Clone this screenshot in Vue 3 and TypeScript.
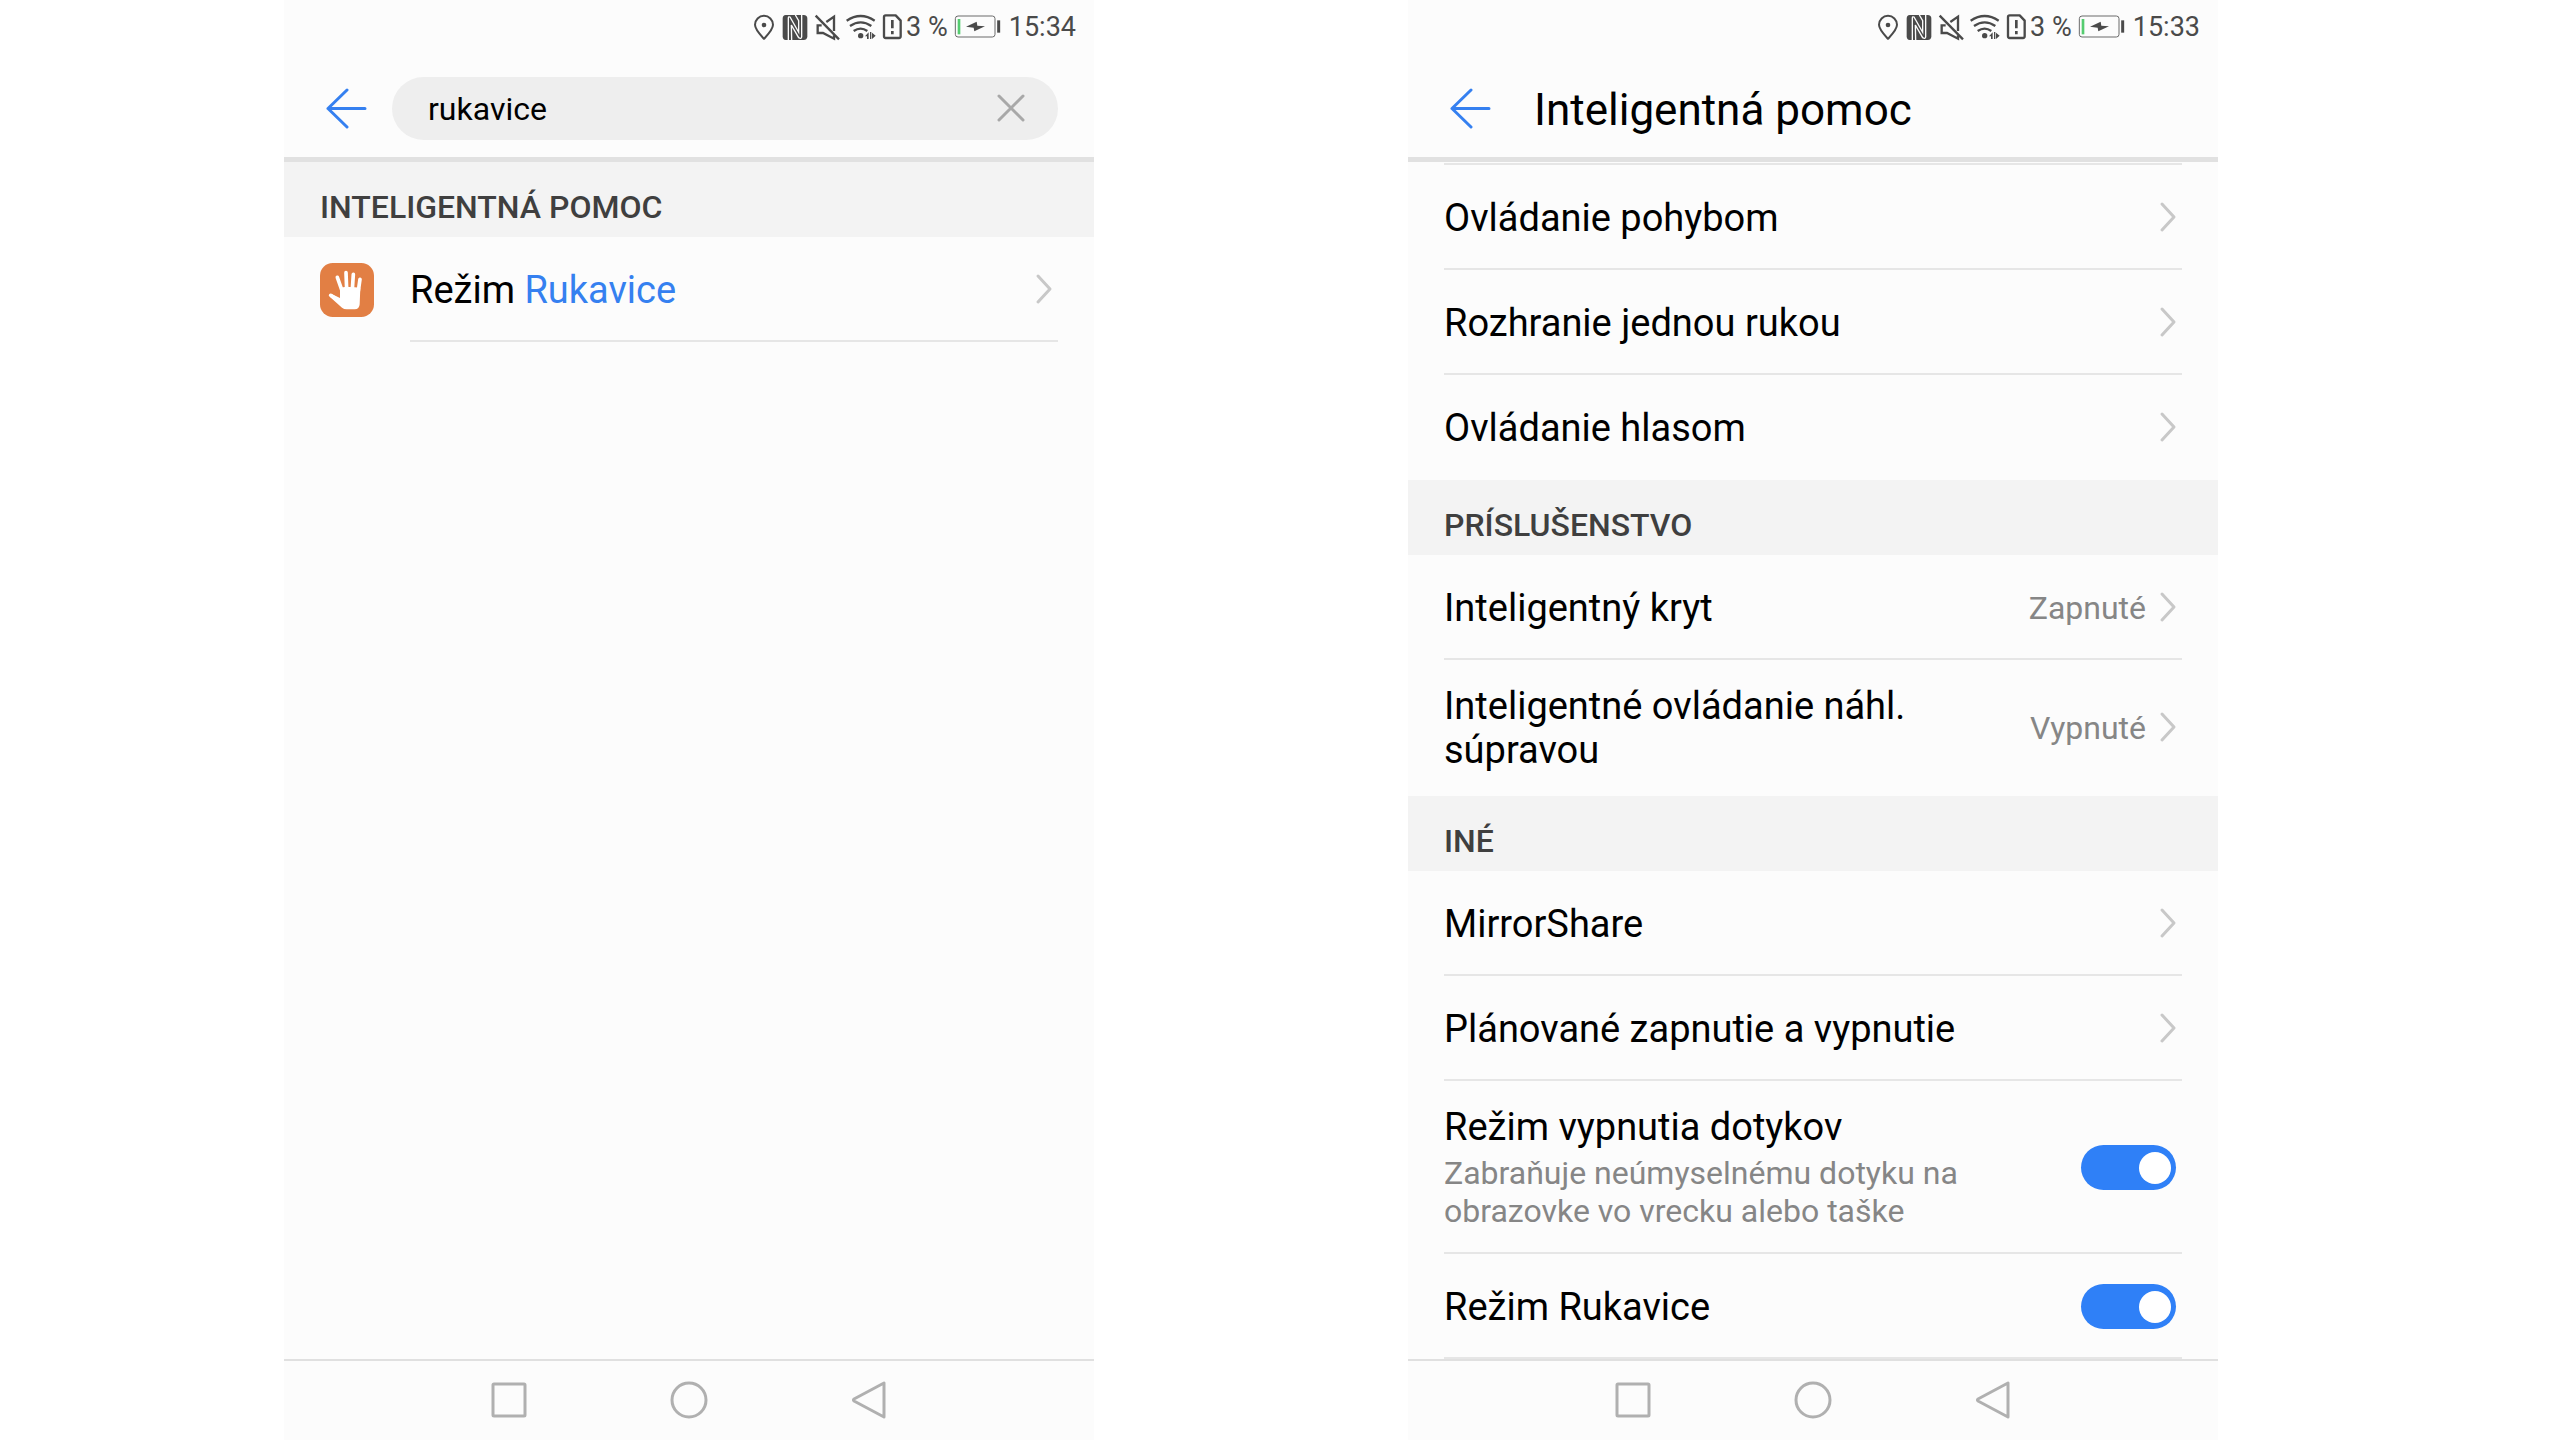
<script setup lang="ts">
import { ref } from 'vue'

interface Row {
  label: string
  value?: string
  hint?: string
  toggle?: boolean
}

interface Group {
  title?: string
  rows: Row[]
}

const query = ref('rukavice')
const times: string[] = ['15:34', '15:33']

const groups = ref<Group[]>([
  {
    rows: [
      { label: 'Ovládanie pohybom' },
      { label: 'Rozhranie jednou rukou' },
      { label: 'Ovládanie hlasom' },
    ],
  },
  {
    title: 'PRÍSLUŠENSTVO',
    rows: [
      { label: 'Inteligentný kryt', value: 'Zapnuté' },
      { label: 'Inteligentné ovládanie náhl. súpravou', value: 'Vypnuté' },
    ],
  },
  {
    title: 'INÉ',
    rows: [
      { label: 'MirrorShare' },
      { label: 'Plánované zapnutie a vypnutie' },
      {
        label: 'Režim vypnutia dotykov',
        hint: 'Zabraňuje neúmyselnému dotyku na obrazovke vo vrecku alebo taške',
        toggle: true,
      },
      { label: 'Režim Rukavice', toggle: true },
    ],
  },
])
</script>

<template>
  <main class="page">
    <section v-for="(time, i) in times" :key="time" class="phone">
      <div class="status">
        <svg class="pin" viewBox="45 42 60 78" aria-hidden="true">
          <path d="M75 47.500c-15 0-27 12-27 27 0 14 13 27 27 42 14-15 27-28 27-42 0-15-12-27-27-27z" fill="none" stroke="currentColor" stroke-width="6" stroke-linejoin="round" />
          <circle cx="75" cy="75" r="7" fill="currentColor" />
        </svg>
        <svg class="nfc" viewBox="123 42 90 78" aria-hidden="true">
          <path d="M140 45h54q11 0 11 11v53q0 11-11 11h-54q-9 0-9-11V56q0-11 9-11z" fill="currentColor" />
          <path d="M148 120V54q0-5 5-3l26 46V62l-10-17M158 120l-1-45 22 38q8 5 9-2V45" fill="none" stroke="#fcfcfc" stroke-width="4" />
        </svg>
        <svg class="mute" viewBox="231 42 72 78" aria-hidden="true">
          <path d="M230 47l70 71" fill="none" stroke="currentColor" stroke-width="7" />
          <path d="M248 76h-12v23h16l33 17v-10M262 66l23-16v43" fill="none" stroke="currentColor" stroke-width="7" />
        </svg>
        <svg class="wifi" viewBox="321 42 90 78" aria-hidden="true">
          <path d="M323 62q42-28 84 0M333 78q32-22 64 0M344 93q21-14 41 0" fill="none" stroke="currentColor" stroke-width="7" />
          <circle cx="365" cy="107" r="8" fill="currentColor" />
          <path d="M378 109l11-12v20h-5v-8zM393 96h4v21h-4zM399 98l11 9-11 10z" fill="currentColor" />
        </svg>
        <svg class="sim" viewBox="429 42 63 78" aria-hidden="true">
          <path d="M440 46h30l15 16v47q0 5-5 5h-40q-5 0-5-5V51q0-5 5-5z" fill="none" stroke="currentColor" stroke-width="7" stroke-linejoin="round" />
          <path d="M460 60v25M460 93v10" stroke="currentColor" stroke-width="8" />
        </svg>
        <span class="percent">3 %</span>
        <svg class="battery" viewBox="645 42 147 78" aria-hidden="true">
          <rect x="649" y="48" width="119" height="63" rx="8" fill="none" stroke="#6a6a6a" stroke-width="3" />
          <path d="M660 57v46" stroke="#55cc70" stroke-width="8" />
          <path d="M681 80l32-15 2 12 23 2-32 15-2-11z" fill="currentColor" />
          <path d="M779 61v37" stroke="currentColor" stroke-width="9" />
        </svg>
        <span class="time">{{ time }}</span>
      </div>

      <header class="bar">
        <button class="back" type="button" aria-label="Späť">
          <svg viewBox="0 0 41 41" aria-hidden="true">
            <path d="M21 2L2 20.500l19 18.500M2 20.500h37" fill="none" stroke="currentColor" stroke-width="3" stroke-linecap="round" stroke-linejoin="round" />
          </svg>
        </button>
        <form v-if="i === 0" class="search" @submit.prevent>
          <input v-model="query" type="text" aria-label="Hľadať" />
          <button type="button" aria-label="Vymazať" @click="query = ''">
            <svg viewBox="0 0 28 28" aria-hidden="true">
              <path d="M2 2l24 24M26 2L2 26" fill="none" stroke="currentColor" stroke-width="3" stroke-linecap="round" />
            </svg>
          </button>
        </form>
        <h1 v-else>Inteligentná pomoc</h1>
      </header>

      <div v-if="i === 0" class="list">
        <h2>INTELIGENTNÁ POMOC</h2>
        <a class="result" href="#">
          <svg class="app" viewBox="0 0 162 162" aria-hidden="true">
            <rect width="162" height="162" rx="38" fill="#e27f44" />
            <g fill="none" stroke="#fff" stroke-width="11" stroke-linecap="round">
              <path d="M32 97l30 20M52 43l14 40M78 29l2 50M100 34l-3 45M120 49l-5 35" />
            </g>
            <path d="M60 76q12-6 28-4 16 0 33 2l-2 50q-1 15-15 15H80q-8 0-14-5L30 102l5-9 25 12z" fill="#fff" />
          </svg>
          <span class="body">
            <span class="label">Režim <mark>Rukavice</mark></span>
            <svg class="chevron" viewBox="0 0 16 30" aria-hidden="true">
              <path d="M2 1l12 13L2 27" />
            </svg>
          </span>
        </a>
      </div>

      <div v-else class="list scrolled">
        <section v-for="(group, g) in groups" :key="g">
          <h2 v-if="group.title">{{ group.title }}</h2>
          <div class="rows" :class="{ open: g === groups.length - 1 }">
            <component
              :is="row.toggle === undefined ? 'a' : 'label'"
              v-for="row in group.rows"
              :key="row.label"
              class="body"
              :href="row.toggle === undefined ? '#' : undefined"
            >
              <span class="label">
                {{ row.label }}
                <small v-if="row.hint">{{ row.hint }}</small>
              </span>
              <span v-if="row.value" class="value">{{ row.value }}</span>
              <input v-if="row.toggle !== undefined" v-model="row.toggle" class="switch" type="checkbox" />
              <svg v-else class="chevron" viewBox="0 0 16 30" aria-hidden="true">
                <path d="M2 1l12 13L2 27" />
              </svg>
            </component>
          </div>
        </section>
      </div>

      <nav class="nav">
        <button type="button" aria-label="Posledné aplikácie">
          <svg viewBox="0 0 38 38" aria-hidden="true"><rect x="3" y="3" width="32" height="32" rx="1" /></svg>
        </button>
        <button type="button" aria-label="Domov">
          <svg viewBox="0 0 38 38" aria-hidden="true"><circle cx="19" cy="19" r="17" /></svg>
        </button>
        <button type="button" aria-label="Naspäť">
          <svg viewBox="0 0 38 38" aria-hidden="true"><path d="M34 2v34L4 20q-1-1 0-2z" /></svg>
        </button>
      </nav>
    </section>
  </main>
</template>

<style>
body {
  margin: 0;
  background: #fff;
}
</style>

<style scoped>
.page {
  display: grid;
  grid-template-columns: 284fr 810fr 314fr 810fr 342fr;
  min-height: 100vh;
  font-family: Roboto, 'Liberation Sans', sans-serif;
  color: #000;
}

.phone {
  display: flex;
  flex-direction: column;
  grid-column: 2;
  min-width: 0;
  background: #fcfcfc;
}

.phone + .phone {
  grid-column: 4;
}

svg {
  display: block;
  flex: none;
}

button {
  display: flex;
  align-items: center;
  justify-content: center;
  padding: 0;
  border: 0;
  background: none;
}

.status {
  display: flex;
  align-items: center;
  justify-content: flex-end;
  gap: 6px;
  height: 54px;
  padding-right: 18px;
  font-size: 27px;
  line-height: 32px;
  color: #4a4a4a;
}

.status svg {
  height: 26px;
  overflow: visible;
}

.pin { width: 20px; }
.nfc,
.wifi { width: 30px; }
.mute { width: 24px; }
.sim { width: 21px; }
.battery { width: 49px; }
.percent { margin-left: -3px; }

.bar {
  display: flex;
  align-items: center;
  gap: 25px;
  height: 108px;
  padding: 5px 36px 0 42px;
  box-sizing: border-box;
  border-bottom: 5px solid #e1e1e1;
}

.back {
  color: #3580f0;
}

.back svg {
  width: 41px;
  height: 41px;
}

.search {
  display: flex;
  flex: 1;
  align-items: center;
  height: 63px;
  min-width: 0;
  padding: 0 33px 0 36px;
  border-radius: 32px;
  background: #eee;
}

.search input {
  flex: 1;
  min-width: 0;
  padding: 2px 0 0;
  border: 0;
  outline: 0;
  background: none;
  font: inherit;
  font-size: 32px;
  color: inherit;
}

.search button {
  color: #a8a8a8;
}

.search svg {
  width: 28px;
  height: 28px;
}

h1 {
  margin: 0;
  padding: 4px 0 0 18px;
  font-size: 44px;
  font-weight: 400;
  line-height: 52px;
}

.list {
  flex: 1;
}

.scrolled {
  padding-top: 1px;
}

.scrolled > section:first-child .rows {
  border-top: 2px solid #e6e6e6;
}

h2 {
  margin: 0;
  padding: 26px 36px 11px;
  background: #f3f3f3;
  color: #3f3f3f;
  font-size: 32px;
  font-weight: 500;
  line-height: 38px;
}

.rows {
  margin: 0 36px;
}

.body {
  display: flex;
  align-items: center;
  min-height: 105px;
  padding: 24px 6px 22px 0;
  box-sizing: border-box;
  border-bottom: 2px solid #e6e6e6;
  color: inherit;
  text-decoration: none;
}

.rows:not(.open) .body:last-child {
  border-bottom-color: transparent;
}

.label {
  flex: 1;
  max-width: 540px;
  margin-right: auto;
  font-size: 38px;
  line-height: 44px;
}

.label small {
  display: block;
  padding-top: 5px;
  font-size: 32px;
  line-height: 38px;
  color: #868686;
}

.value {
  padding-right: 14px;
  font-size: 32px;
  line-height: 38px;
  color: #868686;
}

.chevron {
  width: 16px;
  height: 30px;
  overflow: visible;
  fill: none;
  stroke: #c8c8c8;
  stroke-width: 3px;
  stroke-linecap: round;
  stroke-linejoin: round;
}

.switch {
  display: flex;
  flex: none;
  align-items: center;
  width: 95px;
  height: 45px;
  margin: 0;
  padding: 0 5px;
  box-sizing: border-box;
  border-radius: 23px;
  background: #c8c8c8;
  appearance: none;
}

.switch::before {
  content: '';
  width: 32px;
  height: 32px;
  border-radius: 50%;
  background: #fff;
}

.switch:checked {
  justify-content: flex-end;
  background: #2f80f7;
}

.result {
  display: flex;
  align-items: center;
  gap: 36px;
  padding: 0 36px;
  color: inherit;
  text-decoration: none;
}

.result .body {
  flex: 1;
}

.app {
  width: 54px;
  height: 54px;
}

mark {
  background: none;
  color: #3580f0;
}

.nav {
  display: flex;
  justify-content: center;
  height: 77px;
  padding-bottom: 2px;
  border-top: 2px solid #e0e0e0;
}

.nav button {
  width: 180px;
}

.nav svg {
  width: 38px;
  height: 38px;
  fill: none;
  stroke: #b0b0b0;
  stroke-width: 3px;
  stroke-linejoin: round;
}
</style>
